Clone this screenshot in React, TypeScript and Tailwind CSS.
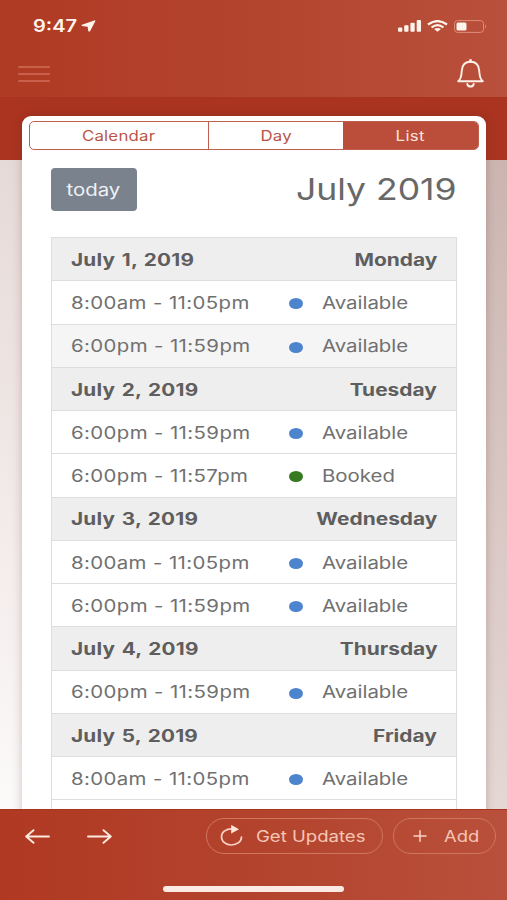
type Slot = {
  time: string;
  status: string;
  shaded?: boolean;
};

type Day = {
  date: string;
  weekday: string;
  slots: Slot[];
};

const days: Day[] = [
  {
    date: "July 1, 2019",
    weekday: "Monday",
    slots: [
      { time: "8:00am - 11:05pm", status: "Available" },
      { time: "6:00pm - 11:59pm", status: "Available", shaded: true },
    ],
  },
  {
    date: "July 2, 2019",
    weekday: "Tuesday",
    slots: [
      { time: "6:00pm - 11:59pm", status: "Available" },
      { time: "6:00pm - 11:57pm", status: "Booked" },
    ],
  },
  {
    date: "July 3, 2019",
    weekday: "Wednesday",
    slots: [
      { time: "8:00am - 11:05pm", status: "Available" },
      { time: "6:00pm - 11:59pm", status: "Available" },
    ],
  },
  {
    date: "July 4, 2019",
    weekday: "Thursday",
    slots: [{ time: "6:00pm - 11:59pm", status: "Available" }],
  },
  {
    date: "July 5, 2019",
    weekday: "Friday",
    slots: [{ time: "8:00am - 11:05pm", status: "Available" }],
  },
];

function StatusBar() {
  return (
    <div className="flex items-center justify-between pt-[15px] pr-[20px] pl-[33px] text-[#fff4ec]">
      <div className="flex h-[22px] items-center">
        <span className="w-[44px] origin-left scale-x-[1.18] text-[17px] leading-[22px] font-semibold whitespace-nowrap">9:47</span>
        <svg className="ml-[4px] h-[12px] w-[15px]" viewBox="0 0 15 12" fill="currentColor">
          <path d="M14 0.2 L0.9 4.7 Q-0.1 5.4 1 6.1 L6.6 6.7 L7.3 10.9 Q8 12.1 9.2 11 L14.4 0.9 Z" />
        </svg>
      </div>
      <div className="flex h-[22px] items-center">
        <svg className="h-[12px] w-[24px]" viewBox="0 0 24 12" fill="currentColor">
          <rect x="0" y="7.5" width="4.3" height="4.2" rx="1" />
          <rect x="6.2" y="5.2" width="4.3" height="6.5" rx="1" />
          <rect x="12.4" y="2.7" width="4.3" height="9" rx="1" />
          <rect x="18.7" y="0" width="4.3" height="11.7" rx="1" />
        </svg>
        <svg className="ml-[5px] h-[12px] w-[21px]" viewBox="0 0 21 12" fill="none" stroke="currentColor" strokeWidth="2.2">
          <path d="M1 4.5 Q10.5 -2.4 20 4.5" />
          <path d="M4.5 7.5 Q10.5 2.6 16.5 7.5" />
          <path d="M7 9.1 Q10.5 6.9 14 9.1 L10.5 11.8 Z" fill="currentColor" stroke="none" />
        </svg>
        <svg className="ml-[6px] h-[13px] w-[33px]" viewBox="0 0 33 13" fill="none">
          <rect x="0.5" y="0.6" width="29" height="11.8" rx="3" stroke="#dd8d7b" />
          <rect x="2.5" y="2.5" width="10" height="8" rx="1.5" fill="currentColor" />
          <path d="M31 4.5 Q33 6.5 31 8.5 Z" fill="#dd8d7b" />
        </svg>
      </div>
    </div>
  );
}

function Header() {
  return (
    <header className="h-[98px] shrink-0 border-b border-[#a8331f] bg-linear-to-r from-[#b03a24] via-[#b3442e] to-[#b9503b]">
      <StatusBar />
      <div className="flex items-start justify-between pt-[22px] pr-[23px] pl-[18px]">
        <div className="mt-[7px] flex w-[32px] flex-col gap-[5px]">
          <div className="h-[2px] rounded-full bg-[#c8604c]" />
          <div className="h-[2px] rounded-full bg-[#c8604c]" />
          <div className="h-[2px] rounded-full bg-[#c8604c]" />
        </div>
        <svg className="h-[29px] w-[27px]" viewBox="0 0 27 29" fill="none" stroke="#fff0e8" strokeWidth="1.9" strokeLinecap="round" strokeLinejoin="round">
          <path d="M1.2 22.3 H25.8 C22.5 20 22.6 16 22.2 11.5 C21.8 6 18.5 2.8 13.5 2.8 C8.5 2.8 5.2 6 4.8 11.5 C4.4 16 4.5 20 1.2 22.3 Z" />
          <path d="M13.5 1.5 V2.5" strokeWidth="2.8" />
          <path d="M10.3 25 C10.8 28.4 16.2 28.4 16.7 25" />
        </svg>
      </div>
    </header>
  );
}

function Tabs() {
  return (
    <div className="grid h-[29px] grid-cols-[179px_134px_1fr] overflow-hidden rounded-[5px] border border-[#bf6051] text-[14px] text-[#b95546]">
      <div className="flex items-center justify-center border-r border-[#bf6051]">
        <span className="scale-x-[1.2] tracking-[0.2px]">Calendar</span>
      </div>
      <div className="flex items-center justify-center">
        <span className="scale-x-[1.2] tracking-[0.2px]">Day</span>
      </div>
      <div className="flex items-center justify-center bg-[#bb4e3b] text-[#fbe3dc]">
        <span className="scale-x-[1.2] tracking-[0.3px]">List</span>
      </div>
    </div>
  );
}

function DayRows({ day }: { day: Day }) {
  return (
    <>
      <div className="flex h-[43.25px] items-center justify-between border-b border-[#dddddd] bg-[#eeeeee] px-[19px] pt-[3px] font-bold text-[#5e5e5e]">
        <span className="origin-left scale-x-[1.22] tracking-[0.2px] [word-spacing:1px]">{day.date}</span>
        <span className="origin-right scale-x-[1.23]">{day.weekday}</span>
      </div>
      {day.slots.map((slot) => (
        <div
          key={slot.time}
          className={`flex h-[43.25px] items-center border-b border-[#dddddd] px-[19px] pt-[3px] ${slot.shaded ? "bg-[#f5f5f5]" : "bg-white"}`}
        >
          <span className="w-[218px]">
            <span className="inline-block origin-left scale-x-[1.2] tracking-[0.32px] whitespace-nowrap">{slot.time}</span>
          </span>
          <span className={`h-[11px] w-[14px] rounded-[50%] ${slot.status === "Booked" ? "bg-[#377a20]" : "bg-[#4c84cd]"}`} />
          <span className="ml-[19px] origin-left scale-x-[1.2]">{slot.status}</span>
        </div>
      ))}
    </>
  );
}

function Footer() {
  return (
    <footer className="relative z-10 h-[91px] shrink-0 border-t border-[#a8331f] bg-linear-to-r from-[#b03923] via-[#b3432d] to-[#b9503b] text-[#f6c5b4]">
      <div className="flex h-[52px] items-center pr-[11px] pl-[25px]">
        <svg className="h-[15px] w-[25px]" viewBox="0 0 25 15" fill="none" stroke="#ffeadf" strokeWidth="1.9" strokeLinecap="round" strokeLinejoin="round">
          <path d="M24 7.5 H1.5 M8.5 1.2 L1.2 7.5 L8.5 13.8" />
        </svg>
        <svg className="ml-[37px] h-[15px] w-[25px]" viewBox="0 0 25 15" fill="none" stroke="#ffeadf" strokeWidth="1.9" strokeLinecap="round" strokeLinejoin="round">
          <path d="M1 7.5 H23.5 M16.5 1.2 L23.8 7.5 L16.5 13.8" />
        </svg>
        <div className="ml-auto flex h-[36px] w-[177px] items-center rounded-full border border-[#cf7661] pl-[13px]">
          <svg className="h-[22px] w-[23px]" viewBox="0 0 23 22" fill="none" stroke="#f9d2c4" strokeWidth="1.7" strokeLinecap="round">
            <path d="M12 3.8 C5.5 3.8 1.5 7.2 1.5 11.7 C1.5 16.5 6 20 11.3 20 C17 20 21.5 16.5 21.5 12" />
            <path d="M11.2 -0.1 L19 4.2 L11.2 8.5 Z" fill="#ffe5da" stroke="none" />
          </svg>
          <span className="ml-[13px] origin-left scale-x-[1.16] text-[16px] whitespace-nowrap">Get Updates</span>
        </div>
        <div className="ml-[10px] flex h-[36px] w-[103px] items-center rounded-full border border-[#cf7661] pl-[19px]">
          <svg className="h-[12px] w-[14px]" viewBox="0 0 14 12" stroke="#f9d2c4" strokeWidth="1.5" strokeLinecap="round">
            <path d="M1 6 H13 M7 0.8 V11.2" />
          </svg>
          <span className="ml-[17px] origin-left scale-x-[1.15] text-[16px]">Add</span>
        </div>
      </div>
      <div className="mx-auto mt-[24px] h-[6px] w-[181px] rounded-full bg-[#fbe9e3]" />
    </footer>
  );
}

export default function App() {
  return (
    <div className="flex h-[900px] w-[507px] flex-col overflow-hidden bg-white font-['Inter',sans-serif]">
      <Header />
      <main className="min-h-0 flex-1 overflow-hidden bg-linear-to-bl from-[#c9b1ac] via-[#e4d7d4] to-[#fcfafa]">
        <div className="h-[62px] bg-[#aa3420]" />
        <div className="relative -mt-[44px] mr-[21px] ml-[22px] h-[720px] rounded-[9px] bg-white px-[7px] pt-[5px] shadow-[0_0_10px_rgba(90,30,30,0.25)]">
          <Tabs />
          <div className="mx-[22px] mt-[18px] flex items-start justify-between">
            <button className="flex h-[43px] w-[86px] items-center justify-center rounded-[4px] bg-[#79828d] pt-[2px] pr-[1px] text-[17px] text-[#eef1f6]">
              <span className="scale-x-[1.2]">today</span>
            </button>
            <h1 className="origin-right scale-x-[1.185] text-[30px] leading-[43px] text-[#686868]">July 2019</h1>
          </div>
          <div className="mx-[22px] mt-[26px] h-[620px] border border-[#dddddd] text-[17px] text-[#707070]">
            {days.map((day) => (
              <DayRows key={day.date} day={day} />
            ))}
          </div>
        </div>
      </main>
      <Footer />
    </div>
  );
}
